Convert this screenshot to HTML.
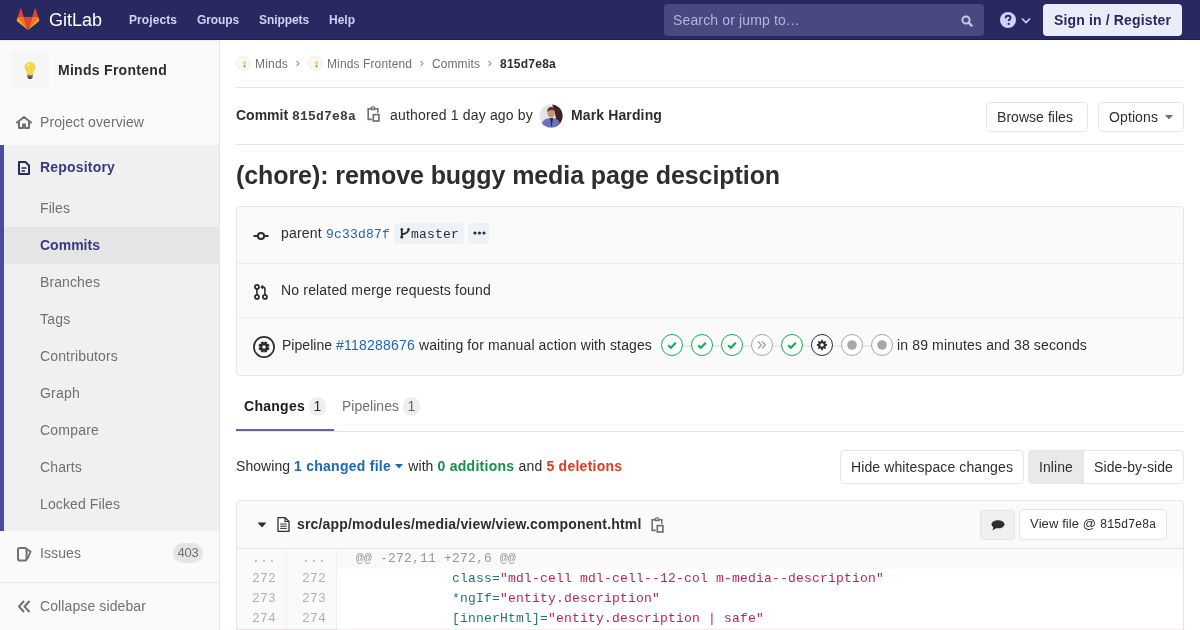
<!DOCTYPE html>
<html><head><meta charset="utf-8">
<style>
*{box-sizing:border-box;margin:0;padding:0}
html,body{width:1200px;height:630px;overflow:hidden;background:#fff}
body{font-family:"Liberation Sans",sans-serif;font-size:14px;color:#2e2e2e;position:relative}
.mono{font-family:"Liberation Mono",monospace}
.abs{position:absolute;white-space:nowrap}
/* navbar */
#nav{position:absolute;left:0;top:0;width:1200px;height:40px;background:#292961;border-bottom:1px solid #1f1f4c}
#nav .link{position:absolute;top:12px;color:#d1d1f0;font-weight:bold;font-size:12px;line-height:16px}
#search{position:absolute;left:664px;top:4px;width:320px;height:32px;background:#494982;border-radius:4px}
#search > span{position:absolute;left:9px;top:8px;color:#b4b4d8;font-size:14px;white-space:nowrap;line-height:16px}
#signin{position:absolute;left:1043px;top:4px;width:139px;height:32px;background:#ebebfa;border-radius:4px;color:#292961;font-weight:bold;font-size:14px;text-align:center;line-height:32px}
/* sidebar */
#side{position:absolute;left:0;top:40px;width:220px;height:590px;background:#fafafa;border-right:1px solid #e5e5e5}
#side .item{position:absolute;left:40px;color:#707070;font-size:14px;white-space:nowrap;line-height:16px}
#repo{position:absolute;left:0;top:105px;width:219px;height:386px;background:#f0f0f0;border-left:4px solid #4b4ba3}
#main{position:absolute;left:220px;top:40px;width:980px;height:590px}

.bav{position:absolute;width:15px;height:15px;border-radius:50%;background:#f9f9f9;border:1px solid #ececec}
.bc{font-size:12px;line-height:17px;color:#707070}
.chv{position:absolute}
.hr{position:absolute;left:16px;width:948px;height:1px;background:#e5e5e5}
.btn{position:absolute;white-space:nowrap;border:1px solid #e5e5e5;border-radius:4px;background:#fff;text-align:center;line-height:28px;color:#2e2e2e;font-size:14px}
#box{position:absolute;left:16px;top:166px;width:948px;height:170px;border:1px solid #e5e5e5;border-radius:4px;background:#fafafa;overflow:hidden}
.seg{position:absolute;left:0;width:100%;border-bottom:1px solid #ededed}
.badge{position:absolute;width:17px;height:19px;border-radius:9px;background:#eee;color:#2e2e2e;font-size:14px;line-height:19px;text-align:center}
.caret{display:inline-block;width:0;height:0;border-left:4px solid transparent;border-right:4px solid transparent;border-top:5px solid #1b69b6;vertical-align:middle}
#file{position:absolute;left:16px;top:460px;width:948px;height:160px;border:1px solid #e5e5e5;border-radius:4px 4px 0 0;background:#fafafa}
#diff{position:absolute;left:17px;top:508px;width:946px;height:100px;background:#fff;border-top:1px solid #e5e5e5;overflow:hidden}
.row{position:absolute;left:0;width:946px;height:20px}
.ln{position:absolute;left:0;top:0;width:50px;height:20px;background:#fafafa;border-right:1px solid #f0f0f0;color:rgba(0,0,0,0.3);font-family:"Liberation Mono",monospace;font-size:13px;line-height:20px;text-align:right;padding-right:10px}
.code{position:absolute;left:100px;top:0;padding-left:19px;font-family:"Liberation Mono",monospace;font-size:13px;line-height:20px;white-space:pre;color:#2e2e2e}
.na{color:#1f7a70}.s{color:#bd2558}
#main,#side,#nav{will-change:transform}
</style></head><body>
<div id="nav">
  <svg style="position:absolute;left:16px;top:8px" width="24" height="23" viewBox="0 0 36 36">
    <path fill="#e24329" d="M2 14l9.38 9v-9l-4-12.28c-.205-.632-1.176-.632-1.38 0z"></path>
    <path fill="#e24329" d="M34 14l-9.38 9v-9l4-12.28c.205-.632 1.176-.632 1.38 0z"></path>
    <path fill="#e24329" d="M18 34.38l3-9.25L24.38 14H11.62L15 25.13z"></path>
    <path fill="#fc6d26" d="M18 34.38L11.38 14H2l16 20.38z"></path>
    <path fill="#fca326" d="M2 14l-1.77 5.46c-.16.49.02 1.03.44 1.33L18 34.38z"></path>
    <path fill="#fc6d26" d="M18 34.38L24.62 14H34L18 34.38z"></path>
    <path fill="#fca326" d="M34 14l1.77 5.46c.16.49-.02 1.03-.44 1.33L18 34.38z"></path>
  </svg>
  <div class="abs" style="left:49px;top:10px;color:#fff;font-size:18px;line-height:20px"><span style="letter-spacing: -0.008px;">GitLab</span></div>
  <div class="abs link" style="left:129px"><span style="letter-spacing: 0.08px;">Projects</span></div>
  <div class="abs link" style="left:197px"><span style="letter-spacing: -0.112px;">Groups</span></div>
  <div class="abs link" style="left:259px"><span style="letter-spacing: -0.084px;">Snippets</span></div>
  <div class="abs link" style="left:329px">Help</div>
  <div id="search"><span><span style="letter-spacing: 0.139px;">Search or jump to…</span></span>
    <svg style="position:absolute;left:297px;top:11px" width="12" height="12" viewBox="0 0 12 12"><circle cx="5" cy="5" r="3.6" fill="none" stroke="#c9c9e6" stroke-width="2"></circle><path d="M7.6 7.6l3 3" stroke="#c9c9e6" stroke-width="2.2" stroke-linecap="round"></path></svg>
  </div>
  <svg style="position:absolute;left:1000px;top:12px" width="16" height="16" viewBox="0 0 16 16"><circle cx="8" cy="8" r="8" fill="#d1d1f0"></circle><path d="M5.6 6.2c0-1.5 1.1-2.4 2.5-2.4s2.4.9 2.4 2.1c0 1.6-1.8 1.7-1.8 3.1" fill="none" stroke="#292961" stroke-width="1.9"></path><circle cx="8.7" cy="11.9" r="1.1" fill="#292961"></circle></svg>
  <svg style="position:absolute;left:1021px;top:17px" width="10" height="7" viewBox="0 0 10 7"><path d="M1 1.5l4 4 4-4" fill="none" stroke="#d1d1f0" stroke-width="1.6"></path></svg>
  <div id="signin"><span style="letter-spacing: 0.147px;">Sign in / Register</span></div>
</div>
<div id="side">
  <div class="abs" style="left:0;top:0;width:219px;height:1px;background:#ececf2"></div>
  <div id="repo"></div>
  <div class="abs" style="left:4px;top:187px;width:215px;height:37px;background:#e5e5e5"></div>
  <div class="abs" style="left:11px;top:11px;width:38px;height:38px;background:#f6f6f6;border-radius:2px"></div>
  <svg style="position:absolute;left:23px;top:21px" width="14" height="19" viewBox="0 0 14 19"><path d="M7 1C3.7 1 1.5 3.3 1.5 6.2c0 2.3 1.6 3.6 2.2 5.2.3.8.3 1.6.4 2.3h5.8c.1-.7.1-1.5.4-2.3.6-1.6 2.2-2.9 2.2-5.2C12.5 3.3 10.3 1 7 1z" fill="#f7d44c"></path><path d="M4.3 6c.2-1.4 1.2-2.4 2.6-2.6" stroke="#fff3b0" stroke-width="1.2" fill="none"></path><rect x="4" y="13.7" width="6" height="1.6" fill="#8a8a8a"></rect><rect x="4.5" y="15.3" width="5" height="1.5" fill="#333"></rect><rect x="5.5" y="16.8" width="3" height="1.2" fill="#333"></rect></svg>
  <div class="abs" style="left:58px;top:22px;font-weight:bold;font-size:14px;color:#2e2e2e;line-height:16px"><span style="letter-spacing: 0.286px;">Minds Frontend</span></div>
  <svg style="position:absolute;left:16px;top:76px" width="16" height="13" viewBox="0 0 16 13"><path d="M8 1L1 6.5h2v5.5h4V8.5h2V12h4V6.5h2z" fill="none" stroke="#707070" stroke-width="2" stroke-linejoin="round"></path></svg>
  <div class="item" style="top:74px"><span style="letter-spacing: 0.081px;">Project overview</span></div>
  <svg style="position:absolute;left:18px;top:121px" width="12" height="14" viewBox="0 0 12 14"><path d="M1 1h6.5L11 4.5V13H1z" fill="none" stroke="#292961" stroke-width="2" stroke-linejoin="round"></path><path d="M3.5 7h5M3.5 10h3.5" stroke="#292961" stroke-width="1.6"></path></svg>
  <div class="item" style="top:119px;color:#393982;font-weight:bold"><span style="letter-spacing: 0.188px;">Repository</span></div>
  <div class="item" style="top:160px"><span style="letter-spacing: 0.087px;">Files</span></div>
  <div class="item" style="top:197px;color:#393982;font-weight:bold"><span style="letter-spacing: 0.013px;">Commits</span></div>
  <div class="item" style="top:234px"><span style="letter-spacing: 0.105px;">Branches</span></div>
  <div class="item" style="top:271px"><span style="letter-spacing: 0.219px;">Tags</span></div>
  <div class="item" style="top:308px"><span style="letter-spacing: 0.145px;">Contributors</span></div>
  <div class="item" style="top:345px"><span style="letter-spacing: 0.216px;">Graph</span></div>
  <div class="item" style="top:382px"><span style="letter-spacing: 0.201px;">Compare</span></div>
  <div class="item" style="top:419px"><span style="letter-spacing: 0.128px;">Charts</span></div>
  <div class="item" style="top:456px"><span style="letter-spacing: 0.117px;">Locked Files</span></div>
  <svg style="position:absolute;left:17px;top:507px" width="15" height="15" viewBox="0 0 15 15"><rect x="1" y="1" width="8.6" height="12.6" rx="1.8" fill="none" stroke="#707070" stroke-width="2"></rect><path d="M9.8 2.3l3.8 2.3-3.3 7.6" fill="none" stroke="#707070" stroke-width="1.8" stroke-linejoin="round"></path></svg>
  <div class="item" style="top:505px"><span style="letter-spacing: 0.089px;">Issues</span></div>
  <div class="abs" style="left:173px;top:503px;width:30px;height:20px;border-radius:10px;background:#e5e5e5;color:#707070;font-size:13px;line-height:20px;text-align:center"><span style="letter-spacing: -0.234px;">403</span></div>
  <div class="abs" style="left:0;top:542px;width:219px;height:1px;background:#e5e5e5"></div>
  <svg style="position:absolute;left:17px;top:560px" width="14" height="13" viewBox="0 0 14 13"><path d="M7 1L2 6.5 7 12M12.5 1l-5 5.5 5 5.5" fill="none" stroke="#707070" stroke-width="2"></path></svg>
  <div class="item" style="top:558px"><span style="letter-spacing: 0.106px;">Collapse sidebar</span></div>
</div>
<div id="main">
  <!-- breadcrumbs -->
  <div class="bav" style="left:16px;top:16px"><svg style="position:absolute;left:4px;top:3px" width="7" height="9" viewBox="0 0 7 9"><path d="M3.5 1C2.4 1 1.7 1.8 1.7 2.8c0 1 .7 1.6.9 2.5h1.8c.2-.9.9-1.5.9-2.5C5.3 1.8 4.6 1 3.5 1z" fill="#f3dc6a"></path><rect x="2.6" y="5.6" width="1.8" height="1.6" fill="#777"></rect></svg></div>
  <div class="abs bc" style="left:35px;top:16px"><span style="letter-spacing: 0.197px;">Minds</span></div>
  <svg class="chv" style="left:75px;top:19px" width="6" height="9" viewBox="0 0 6 9"><path d="M1.5 2l2.5 2.5L1.5 7" fill="none" stroke="#a0a0a0" stroke-width="1.1"></path></svg>
  <div class="bav" style="left:88px;top:16px"><svg style="position:absolute;left:4px;top:3px" width="7" height="9" viewBox="0 0 7 9"><path d="M3.5 1C2.4 1 1.7 1.8 1.7 2.8c0 1 .7 1.6.9 2.5h1.8c.2-.9.9-1.5.9-2.5C5.3 1.8 4.6 1 3.5 1z" fill="#f3dc6a"></path><rect x="2.6" y="5.6" width="1.8" height="1.6" fill="#777"></rect></svg></div>
  <div class="abs bc" style="left:107px;top:16px"><span style="letter-spacing: 0.116px;">Minds Frontend</span></div>
  <svg class="chv" style="left:199px;top:19px" width="6" height="9" viewBox="0 0 6 9"><path d="M1.5 2l2.5 2.5L1.5 7" fill="none" stroke="#a0a0a0" stroke-width="1.1"></path></svg>
  <div class="abs bc" style="left:212px;top:16px"><span style="letter-spacing: 0.094px;">Commits</span></div>
  <svg class="chv" style="left:267px;top:19px" width="6" height="9" viewBox="0 0 6 9"><path d="M1.5 2l2.5 2.5L1.5 7" fill="none" stroke="#a0a0a0" stroke-width="1.1"></path></svg>
  <div class="abs bc" style="left:280px;top:16px;color:#2e2e2e;font-weight:bold"><span style="letter-spacing: 0.244px;">815d7e8a</span></div>
  <div class="hr" style="top:47px"></div>
  <!-- commit header -->
  <div class="abs" style="left:16px;top:65px;line-height:20px;font-weight:bold">Commit <span class="mono" style="font-size:13px;font-weight:bold;color:#3a3a3a"><span style="letter-spacing: 0.197px;">815d7e8a</span></span></div>
  <svg style="position:absolute;left:147px;top:66px" width="13" height="16" viewBox="0 0 13 16"><path d="M3.6 2.8H1.2v10.6h3.6" stroke="#707070" stroke-width="1.6" fill="none"></path><path d="M8.6 2.8h2.2v4" stroke="#707070" stroke-width="1.6" fill="none"></path><path d="M3.4 4.2V2.4C3.4 1.1 4.5 0.3 6 0.3s2.6 0.8 2.6 2.1v1.8z" fill="#707070"></path><circle cx="6" cy="2.1" r="0.8" fill="#fff"></circle><rect x="6.3" y="8.6" width="5.6" height="6.4" stroke="#707070" stroke-width="1.7" fill="none"></rect></svg>
  <div class="abs" style="left:170px;top:65px;line-height:20px;color:#2e2e2e"><span style="letter-spacing: 0.174px;">authored 1 day ago by</span></div>
  <svg style="position:absolute;left:319px;top:64px" width="24" height="24" viewBox="0 0 24 24"><defs><clipPath id="cp"><circle cx="12" cy="12" r="11.6"></circle></clipPath></defs><g clip-path="url(#cp)"><rect width="24" height="24" fill="#e4e4ea"></rect><path d="M13 0h11v24H16c2-6 1-14-3-24z" fill="#3c2320"></path><path d="M2 24c0-6 3-10 10-10s9 3 10 10z" fill="#6d72c0"></path><path d="M11 14l1.5 10 1.5-10z" fill="#2c2c4a"></path><ellipse cx="12.2" cy="9.2" rx="3.6" ry="4.2" fill="#c4937c"></ellipse><path d="M8.2 8.2c-.3-3.4 1.6-5.3 4.2-5.3 2.8 0 4.4 1.8 4.1 5-1-1.4-2.3-2-4.1-2s-3.1.7-4.2 2.3z" fill="#5b3422"></path></g></svg>
  <div class="abs" style="left:351px;top:65px;line-height:20px;font-weight:bold"><span style="letter-spacing: 0.128px;">Mark Harding</span></div>
  <div class="btn" style="left:766px;top:62px;width:102px;height:30px;text-align:left;padding-left:10px"><span style="letter-spacing: 0.044px;">Browse files</span></div>
  <div class="btn" style="left:878px;top:62px;width:86px;height:30px;text-align:left;padding-left:10px"><span style="letter-spacing: 0.107px;">Options</span></div>
  <svg style="position:absolute;left:945px;top:75px" width="8" height="5" viewBox="0 0 8 5"><path d="M0 0h8L4 4.5z" fill="#707070"></path></svg>
  <div class="hr" style="top:104px"></div>
  <!-- title -->
  <div class="abs" style="left:16px;top:120px;font-size:25px;line-height:30px;font-weight:bold;color:#2e2e2e"><span style="letter-spacing: -0.077px;">(chore): remove buggy media page desciption</span></div>
  <!-- info box -->
  <div id="box">
    <div class="seg" style="top:0;height:57px"></div>
    <div class="seg" style="top:57px;height:54px"></div>
    <div class="seg" style="top:111px;height:58px;border:none"></div>
  </div>
  <svg style="position:absolute;left:33px;top:188px" width="16" height="16" viewBox="0 0 16 16"><path d="M0.5 8h3.8M11.7 8h3.8" stroke="#2e2e2e" stroke-width="2"></path><circle cx="8" cy="8" r="3.1" fill="none" stroke="#2e2e2e" stroke-width="2"></circle></svg>
  <div class="abs" style="left:61px;top:183px;line-height:20px"><span style="letter-spacing: 0.201px;">parent </span><a class="mono" style="color:#1b69b6;font-size:13px"><span style="letter-spacing: 0.197px;">9c33d87f</span></a></div>
  <div class="abs" style="left:174px;top:183px;width:70px;height:21px;background:#edf2f8;border-radius:3px"></div>
  <svg style="position:absolute;left:180px;top:188px" width="10" height="11" viewBox="0 0 10 11"><path d="M1.8 1.2v8.6" stroke="#2e2e2e" stroke-width="1.9"></path><circle cx="1.8" cy="1.3" r="1.3" fill="#2e2e2e"></circle><circle cx="1.8" cy="9.2" r="1.4" fill="#2e2e2e"></circle><path d="M1.9 6.4C5.2 5.8 8.2 4.8 8.6 1.4" fill="none" stroke="#2e2e2e" stroke-width="1.7"></path><circle cx="8.5" cy="1.4" r="1.3" fill="#2e2e2e"></circle></svg>
  <div class="abs mono" style="left:191px;top:184px;line-height:21px;font-size:13px;color:#2e2e2e"><span style="letter-spacing: 0.198px;">master</span></div>
  <div class="abs" style="left:248px;top:183px;width:21px;height:21px;background:#edf2f8;border-radius:3px"></div>
  <svg style="position:absolute;left:253px;top:191px" width="13" height="4" viewBox="0 0 13 4"><circle cx="2" cy="2" r="1.6" fill="#2e2e2e"></circle><circle cx="6.5" cy="2" r="1.6" fill="#2e2e2e"></circle><circle cx="11" cy="2" r="1.6" fill="#2e2e2e"></circle></svg>
  <svg style="position:absolute;left:34px;top:244px" width="14" height="16" viewBox="0 0 14 16"><circle cx="2.9" cy="2.9" r="2" fill="#fff" stroke="#2e2e2e" stroke-width="1.8"></circle><circle cx="2.9" cy="12.9" r="2" fill="#fff" stroke="#2e2e2e" stroke-width="1.8"></circle><circle cx="10.9" cy="12.9" r="2" fill="#fff" stroke="#2e2e2e" stroke-width="1.8"></circle><path d="M2.9 4.8v6.2M10.9 11V5c0-1.2-.7-1.9-1.9-1.9H7.5" fill="none" stroke="#2e2e2e" stroke-width="1.6"></path><path d="M8.6 1.3L6.8 3.1l1.8 1.8z" fill="#2e2e2e" stroke="#2e2e2e" stroke-width="1"></path></svg>
  <div class="abs" style="left:61px;top:240px;line-height:20px"><span style="letter-spacing: 0.171px;">No related merge requests found</span></div>
  <svg style="position:absolute;left:33px;top:296px" width="22" height="22" viewBox="0 0 22 22"><circle cx="11" cy="11" r="10.1" fill="#fff" stroke="#2e2e2e" stroke-width="1.7"></circle><path fill-rule="evenodd" fill="#2e2e2e" d="M15.20 11.13 L16.63 11.89 L15.61 14.35 L14.06 13.88 L13.88 14.06 L14.35 15.61 L11.89 16.63 L11.13 15.20 L10.87 15.20 L10.11 16.63 L7.65 15.61 L8.12 14.06 L7.94 13.88 L6.39 14.35 L5.37 11.89 L6.80 11.13 L6.80 10.87 L5.37 10.11 L6.39 7.65 L7.94 8.12 L8.12 7.94 L7.65 6.39 L10.11 5.37 L10.87 6.80 L11.13 6.80 L11.89 5.37 L14.35 6.39 L13.88 7.94 L14.06 8.12 L15.61 7.65 L16.63 10.11 L15.20 10.87Z M12.70 11.00 A1.7 1.7 0 1 0 9.30 11.00 A1.7 1.7 0 1 0 12.70 11.00Z"></path></svg>
  <div class="abs" style="left:62px;top:295px;line-height:20px"><span style="letter-spacing: 0.033px;">Pipeline </span><a style="color:#1b69b6"><span style="letter-spacing: 0.212px;">#118288676</span></a><span style="letter-spacing: 0.113px;"> waiting for manual action with stages</span></div>
  <div class="abs" style="left:463px;top:305px;width:9px;height:2px;background:#ebebeb"></div><div class="abs" style="left:493px;top:305px;width:9px;height:2px;background:#ebebeb"></div><div class="abs" style="left:523px;top:305px;width:9px;height:2px;background:#ebebeb"></div><div class="abs" style="left:553px;top:305px;width:9px;height:2px;background:#ebebeb"></div><div class="abs" style="left:583px;top:305px;width:9px;height:2px;background:#ebebeb"></div><div class="abs" style="left:613px;top:305px;width:9px;height:2px;background:#ebebeb"></div><div class="abs" style="left:643px;top:305px;width:9px;height:2px;background:#ebebeb"></div><svg style="position:absolute;left:441px;top:294px" width="22" height="22" viewBox="0 0 22 22"><circle cx="11" cy="11" r="10.5" fill="#fff" stroke="#1aaa55" stroke-width="1"></circle><path d="M7.2 11.2l2.6 2.5 5-5" fill="none" stroke="#1aaa55" stroke-width="2.2"></path></svg><svg style="position:absolute;left:471px;top:294px" width="22" height="22" viewBox="0 0 22 22"><circle cx="11" cy="11" r="10.5" fill="#fff" stroke="#1aaa55" stroke-width="1"></circle><path d="M7.2 11.2l2.6 2.5 5-5" fill="none" stroke="#1aaa55" stroke-width="2.2"></path></svg><svg style="position:absolute;left:501px;top:294px" width="22" height="22" viewBox="0 0 22 22"><circle cx="11" cy="11" r="10.5" fill="#fff" stroke="#1aaa55" stroke-width="1"></circle><path d="M7.2 11.2l2.6 2.5 5-5" fill="none" stroke="#1aaa55" stroke-width="2.2"></path></svg><svg style="position:absolute;left:531px;top:294px" width="22" height="22" viewBox="0 0 22 22"><circle cx="11" cy="11" r="10.5" fill="#fff" stroke="#a7a7a7" stroke-width="1"></circle><path d="M7 7.5l3.3 3.5L7 14.5M11 7.5l3.3 3.5L11 14.5" fill="none" stroke="#a7a7a7" stroke-width="1.5"></path></svg><svg style="position:absolute;left:561px;top:294px" width="22" height="22" viewBox="0 0 22 22"><circle cx="11" cy="11" r="10.5" fill="#fff" stroke="#1aaa55" stroke-width="1"></circle><path d="M7.2 11.2l2.6 2.5 5-5" fill="none" stroke="#1aaa55" stroke-width="2.2"></path></svg><svg style="position:absolute;left:591px;top:294px" width="22" height="22" viewBox="0 0 22 22"><circle cx="11" cy="11" r="10.5" fill="#fff" stroke="#2e2e2e" stroke-width="1"></circle><path fill-rule="evenodd" fill="#2e2e2e" d="M14.79 10.08 L16.14 10.22 L16.14 11.78 L14.79 11.92 L14.33 13.03 L15.19 14.08 L14.08 15.19 L13.03 14.33 L11.92 14.79 L11.78 16.14 L10.22 16.14 L10.08 14.79 L8.97 14.33 L7.92 15.19 L6.81 14.08 L7.67 13.03 L7.21 11.92 L5.86 11.78 L5.86 10.22 L7.21 10.08 L7.67 8.97 L6.81 7.92 L7.92 6.81 L8.97 7.67 L10.08 7.21 L10.22 5.86 L11.78 5.86 L11.92 7.21 L13.03 7.67 L14.08 6.81 L15.19 7.92 L14.33 8.97Z M12.80 11.00 A1.8 1.8 0 1 0 9.20 11.00 A1.8 1.8 0 1 0 12.80 11.00Z"></path></svg><svg style="position:absolute;left:621px;top:294px" width="22" height="22" viewBox="0 0 22 22"><circle cx="11" cy="11" r="10.5" fill="#fff" stroke="#a7a7a7" stroke-width="1"></circle><circle cx="11" cy="11" r="4.8" fill="#a7a7a7"></circle></svg><svg style="position:absolute;left:651px;top:294px" width="22" height="22" viewBox="0 0 22 22"><circle cx="11" cy="11" r="10.5" fill="#fff" stroke="#a7a7a7" stroke-width="1"></circle><circle cx="11" cy="11" r="4.8" fill="#a7a7a7"></circle></svg>
  <div class="abs" style="left:677px;top:295px;line-height:20px"><span style="letter-spacing: 0.142px;">in 89 minutes and 38 seconds</span></div>
  <!-- tabs -->
  <div class="abs" style="left:24px;top:356px;line-height:20px;font-weight:bold;color:#1c1c1c"><span style="letter-spacing: 0.268px;">Changes</span></div>
  <div class="badge" style="left:89px;top:357px"><span style="letter-spacing: 0.203px;">1</span></div>
  <div class="abs" style="left:122px;top:356px;line-height:20px;color:#707070"><span style="letter-spacing: 0.019px;">Pipelines</span></div>
  <div class="badge" style="left:183px;top:357px;color:#666"><span style="letter-spacing: 0.203px;">1</span></div>
  <div class="hr" style="top:391px"></div>
  <div class="abs" style="left:16px;top:389px;width:98px;height:2px;background:#6262b2"></div>
  <!-- showing -->
  <div class="abs" style="left:16px;top:416px;line-height:20px"><span style="letter-spacing: 0.051px;">Showing </span><b style="color:#1b69b6"><span style="letter-spacing: 0.26px;">1 changed file</span></b> <svg width="8" height="5" viewBox="0 0 8 5" style="vertical-align:2px;margin-right:1.5px"><path d="M0 0h8L4 4.5z" fill="#1b69b6"></path></svg><span style="letter-spacing: 0.052px;"> with </span><b style="color:#168f48"><span style="letter-spacing: 0.281px;">0 additions</span></b><span style="letter-spacing: 0.172px;"> and </span><b style="color:#db3b21"><span style="letter-spacing: 0.26px;">5 deletions</span></b></div>
  <div class="btn" style="left:620px;top:410px;width:184px;height:34px;line-height:33px"><span style="letter-spacing: 0.107px;">Hide whitespace changes</span></div>
  <div class="btn" style="left:808px;top:410px;width:56px;height:34px;line-height:33px;background:#e9e9e9;border-radius:4px 0 0 4px"><span style="letter-spacing: 0.089px;">Inline</span></div>
  <div class="btn" style="left:863px;top:410px;width:101px;height:34px;line-height:33px;border-radius:0 4px 4px 0"><span style="letter-spacing: 0.098px;">Side-by-side</span></div>
  <!-- file -->
  <div id="file"></div>
  <svg style="position:absolute;left:37px;top:482px" width="10" height="6" viewBox="0 0 10 6"><path d="M0.5 0.5h9L5 5.5z" fill="#2e2e2e"></path></svg>
  <svg style="position:absolute;left:57px;top:477px" width="13" height="15" viewBox="0 0 13 15"><path d="M1 0.7h7.2l3.8 3.8v9.8H1z" fill="#fff" stroke="#2e2e2e" stroke-width="1.3" stroke-linejoin="round"></path><path d="M8 0.7v3.8h4" fill="none" stroke="#2e2e2e" stroke-width="1.2"></path><path d="M3.2 7h6.6M3.2 9.2h6.6M3.2 11.4h6.6" stroke="#2e2e2e" stroke-width="1"></path></svg>
  <div class="abs" style="left:77px;top:474px;line-height:20px;font-weight:bold;color:#2e2e2e"><span style="letter-spacing: 0.177px;">src/app/modules/media/view/view.component.html</span></div>
  <svg style="position:absolute;left:431px;top:477px" width="13" height="16" viewBox="0 0 13 16"><path d="M3.6 2.8H1.2v10.6h3.6" stroke="#707070" stroke-width="1.6" fill="none"></path><path d="M8.6 2.8h2.2v4" stroke="#707070" stroke-width="1.6" fill="none"></path><path d="M3.4 4.2V2.4C3.4 1.1 4.5 0.3 6 0.3s2.6 0.8 2.6 2.1v1.8z" fill="#707070"></path><circle cx="6" cy="2.1" r="0.8" fill="#fff"></circle><rect x="6.3" y="8.6" width="5.6" height="6.4" stroke="#707070" stroke-width="1.7" fill="none"></rect></svg>
  <div class="abs" style="left:760px;top:470px;width:35px;height:30px;background:#f0f0f0;border:1px solid #e5e5e5;border-radius:3px"></div>
  <svg style="position:absolute;left:771px;top:480px" width="14" height="11" viewBox="0 0 14 11"><ellipse cx="7" cy="4.3" rx="6.5" ry="4" fill="#2e2e2e"></ellipse><path d="M2.5 6.5L1.5 10.5 6 7.5z" fill="#2e2e2e"></path></svg>
  <div class="btn" style="left:799px;top:469px;width:148px;height:31px;line-height:28px;font-size:13px"><span style="letter-spacing: 0.098px;">View file @ </span><span class="mono" style="font-size:12px"><span style="letter-spacing: -0.201px;">815d7e8a</span></span></div>
  <div id="diff">
    <div class="row" style="top:0;background:#fafafa"><div class="ln"><span style="letter-spacing: 0.198px;">...</span></div><div class="ln" style="left:50px"><span style="letter-spacing: 0.198px;">...</span></div><div class="code" style="color:#999"><span style="letter-spacing: 0.198px;">@@ -272,11 +272,6 @@</span></div></div>
    <div class="row" style="top:20px"><div class="ln"><span style="letter-spacing: 0.198px;">272</span></div><div class="ln" style="left:50px"><span style="letter-spacing: 0.198px;">272</span></div><div class="code"><span style="letter-spacing: 0.198px;">            </span><span class="na"><span style="letter-spacing: 0.198px;">class=</span></span><span class="s"><span style="letter-spacing: 0.199px;">"mdl-cell mdl-cell--12-col m-media--description"</span></span></div></div>
    <div class="row" style="top:40px"><div class="ln"><span style="letter-spacing: 0.198px;">273</span></div><div class="ln" style="left:50px"><span style="letter-spacing: 0.198px;">273</span></div><div class="code"><span style="letter-spacing: 0.198px;">            </span><span class="na"><span style="letter-spacing: 0.198px;">*ngIf=</span></span><span class="s"><span style="letter-spacing: 0.198px;">"entity.description"</span></span></div></div>
    <div class="row" style="top:60px"><div class="ln"><span style="letter-spacing: 0.198px;">274</span></div><div class="ln" style="left:50px"><span style="letter-spacing: 0.198px;">274</span></div><div class="code"><span style="letter-spacing: 0.198px;">            </span><span class="na"><span style="letter-spacing: 0.198px;">[innerHtml]=</span></span><span class="s"><span style="letter-spacing: 0.198px;">"entity.description | safe"</span></span></div></div>
    <div class="row" style="top:80px;background:#fbe9eb"><div class="ln" style="background:#f9d7dc;border-color:#fac5cd"></div><div class="ln" style="left:50px;background:#f9d7dc;border-color:#fac5cd"></div></div>
  </div>
</div>

</body></html>
